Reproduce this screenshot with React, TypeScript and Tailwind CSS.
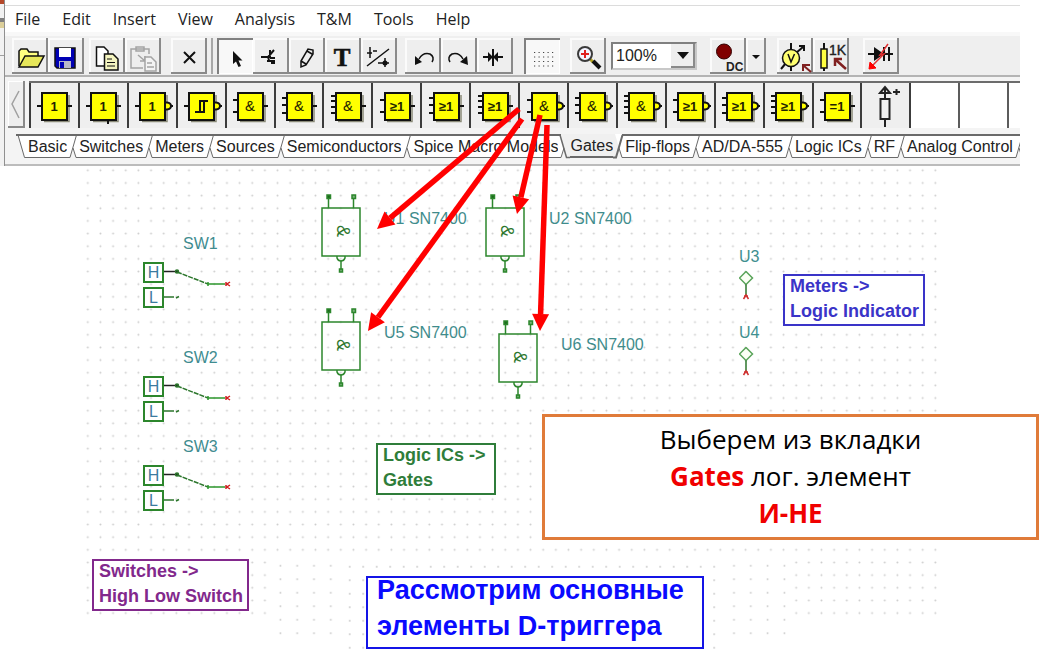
import type { ReactNode } from "react";

type Pin = "none" | "line" | "bubble";
type Chip = { name: string; mark: string; inputs: number; out: Pin; stem?: boolean };

const menus = ["File", "Edit", "Insert", "View", "Analysis", "T&M", "Tools", "Help"];

const chips: Chip[] = [
  { name: "Buffer", mark: "1", inputs: 1, out: "line" },
  { name: "Tri-state buffer", mark: "1", inputs: 1, out: "line", stem: true },
  { name: "Inverter", mark: "1", inputs: 1, out: "bubble" },
  { name: "Schmitt inverter", mark: "S", inputs: 1, out: "bubble" },
  { name: "AND 2", mark: "&", inputs: 2, out: "line" },
  { name: "AND 3", mark: "&", inputs: 3, out: "line" },
  { name: "AND 4", mark: "&", inputs: 4, out: "line" },
  { name: "OR 2", mark: "≥1", inputs: 2, out: "line" },
  { name: "OR 3", mark: "≥1", inputs: 3, out: "line" },
  { name: "OR 4", mark: "≥1", inputs: 4, out: "line" },
  { name: "NAND 2", mark: "&", inputs: 2, out: "bubble" },
  { name: "NAND 3", mark: "&", inputs: 3, out: "bubble" },
  { name: "NAND 4", mark: "&", inputs: 4, out: "bubble" },
  { name: "NOR 2", mark: "≥1", inputs: 2, out: "bubble" },
  { name: "NOR 3", mark: "≥1", inputs: 3, out: "bubble" },
  { name: "NOR 4", mark: "≥1", inputs: 4, out: "bubble" },
  { name: "XOR", mark: "=1", inputs: 2, out: "line" },
];

const tabs = [
  "Basic", "Switches", "Meters", "Sources", "Semiconductors", "Spice Macro Models",
  "Gates", "Flip-flops", "AD/DA-555", "Logic ICs", "RF", "Analog Control",
];
const activeTab = "Gates";

const inputRows: Record<number, number[]> = {
  1: [23],
  2: [17, 29],
  3: [15, 22, 30],
  4: [13, 18, 24, 30],
};

function ToolButton({ label, pressed, narrow, children }: { label: string; pressed?: boolean; narrow?: boolean; children: ReactNode }) {
  const size = narrow ? "h-9 w-5" : "h-9 w-9";
  const look = pressed
    ? "bg-[#f8f8f8] shadow-[inset_2px_2px_0_#808080,inset_-1px_-1px_0_#ffffff]"
    : "bg-[#eeeeee] shadow-[inset_-2px_-2px_0_#8a8a8a,inset_2px_2px_0_#fbfbfb]";
  return (
    <button type="button" aria-label={label} aria-pressed={pressed} className={`${size} ${look} shrink-0`}>
      <svg viewBox={narrow ? "0 0 20 36" : "0 0 36 36"} className="block h-full w-full" fill="none" stroke="#111">
        {children}
      </svg>
    </button>
  );
}

function ChipIcon({ chip }: { chip: Chip }) {
  return (
    <svg viewBox="0 0 46 44" className="h-11 w-[46px]" fill="none" stroke="#111" strokeWidth="2">
      <path d="M13 38.5H38V12" stroke="#8a8a78" strokeWidth="1.500" />
      {inputRows[chip.inputs].map((y) => (
        <path key={y} d={`M6 ${y}H11`} />
      ))}
      {chip.out === "line" && <path d="M36 23H41" />}
      {chip.out === "bubble" && <path d="M36 19.5H38Q42 20 42 23Q42 26 38 26.5H36M42 23H44" fill="#ffff00" />}
      {chip.stem && <path d="M28 38V41" />}
      <rect x="11" y="10" width="25" height="27" fill="#ffff00" />
      {chip.mark === "S" ? (
        <path d="M17 29H22V18H30M21 29H26V18" />
      ) : (
        <text
          x="23"
          y="28"
          textAnchor="middle"
          fill="#222200"
          stroke="none"
          className={chip.mark === "&" ? "font-['Liberation_Sans'] text-[15px]" : "font-['Liberation_Sans'] text-[13px] font-bold"}
        >
          {chip.mark}
        </text>
      )}
    </svg>
  );
}

function TabEdge({ before, after }: { before?: string; after?: string }) {
  const leftActive = before === activeTab;
  const rightActive = after === activeTab;
  return (
    <svg viewBox="0 0 12 26" className="h-[26px] w-3 shrink-0" fill="none" stroke="#6a6a6a">
      {before && <path d="M0 0H10L3.500 23.500H0Z" fill={leftActive ? "#f0f0f0" : "#fff"} stroke="none" />}
      {after && <path d="M2 0H12V23.500H9Z" fill={rightActive ? "#f0f0f0" : "#fff"} stroke="none" />}
      {before && <path d={rightActive ? "M0 23.500H3L6 14" : "M0 23.500H3L9.500 1"} strokeWidth={leftActive ? 2 : 1} />}
      {after && <path d={rightActive || !before ? "M2 1L8.500 23.500H12" : "M6 14L9 23.500H12"} strokeWidth={rightActive ? 1.5 : 1} />}
      <path d={rightActive ? "M0 1H3" : leftActive ? "M9 1H12" : "M0 1H12"} strokeWidth="2" />
    </svg>
  );
}

function GateSymbol({ place }: { place: string }) {
  return (
    <svg viewBox="0 0 42 80" className={`absolute h-20 w-[42px] ${place}`} fill="none" stroke="#2c862c" strokeWidth="1.500">
      <rect x="2" y="14" width="38" height="48" />
      <path d="M8.500 4V14M33.500 4V14M21 67V75" />
      <rect x="7" y="1" width="3.500" height="3.500" fill="#1d6a1d" />
      <rect x="32" y="1" width="3.500" height="3.500" fill="#7ab27a" />
      <rect x="19.500" y="75" width="3" height="3" fill="#7ab27a" />
      <path d="M17 62V64Q18 67 21 67Q24 67 25 64V62" />
      <text transform="translate(17 37) rotate(90)" textAnchor="middle" fill="#2c762c" stroke="none" className="font-['Liberation_Sans'] text-[18px]">
        &amp;
      </text>
    </svg>
  );
}

function SwitchSymbol({ place, name }: { place: string; name: string }) {
  return (
    <div className={`absolute w-[90px] ${place}`}>
      <div className="pl-10 leading-5 text-[#3f8c90]">{name}</div>
      <div className="relative mt-2 flex flex-col gap-1">
        <div className="flex h-[21px] w-[21px] items-center justify-center border-2 border-[#2c862c] bg-white text-[#3b7ba0]">H</div>
        <div className="flex h-[21px] w-[21px] items-center justify-center border-2 border-[#2c862c] bg-white text-[#3b7ba0]">L</div>
        <svg viewBox="0 0 90 48" className="absolute left-0 top-0 h-12 w-[90px]" fill="none" stroke="#2c762c" strokeWidth="1.500">
          <path d="M21 9.500H34" stroke="#222" />
          <circle cx="34" cy="9.500" r="1.500" fill="#222" />
          <path d="M34 10L65 22" strokeDasharray="5 1" />
          <path d="M65 22H82M65 20V24" stroke="#2c962c" />
          <path d="M83 20V24M87 20L84 22L87 24" stroke="#d02020" />
          <path d="M21 35H31M33 36L36 34.500" />
        </svg>
      </div>
    </div>
  );
}

function IndicatorSymbol({ place, name }: { place: string; name: string }) {
  return (
    <div className={`absolute w-8 ${place}`}>
      <div className="leading-5 text-[#3f9090]">{name}</div>
      <svg viewBox="0 0 16 32" className="mt-1 h-8 w-4" fill="none" stroke="#5aa45a" strokeWidth="1.500">
        <path d="M7 .500L13.500 7L7 13.500L.5 7Z" fill="#fbfff5" />
        <path d="M7 13.500V25" stroke="#2c762c" />
        <path d="M4.500 28L7 24L9.500 28M5 25H9" stroke="#d03030" />
      </svg>
    </div>
  );
}

function DotGrid() {
  return (
    <svg className="absolute left-0 top-0 h-full w-[1020px]" aria-hidden="true">
      <defs>
        <pattern id="fine" x="81.500" y="-2" width="12.650" height="12.650" patternUnits="userSpaceOnUse">
          <circle cx="6.300" cy="6.300" r="1" fill="#cdcdcd" />
        </pattern>
        <pattern id="coarse" x="272" y="393" width="16.800" height="13.500" patternUnits="userSpaceOnUse">
          <circle cx="8.400" cy="6.700" r="1" fill="#cdcdcd" />
        </pattern>
        <pattern id="middle" x="343" y="394" width="13.500" height="13.500" patternUnits="userSpaceOnUse">
          <circle cx="6.700" cy="6.700" r="1" fill="#cdcdcd" />
        </pattern>
      </defs>
      <rect x="82" y="0" width="860" height="390" fill="url(#fine)" />
      <rect x="82" y="390" width="187" height="62" fill="url(#fine)" />
      <rect x="794" y="390" width="148" height="62" fill="url(#fine)" />
      <rect x="274" y="393" width="66" height="80" fill="url(#coarse)" />
      <rect x="728" y="393" width="62" height="80" fill="url(#coarse)" />
      <rect x="345" y="394" width="374" height="94" fill="url(#middle)" />
    </svg>
  );
}

function Note({ place, children }: { place: string; children: ReactNode }) {
  return (
    <div className={`absolute h-[52px] whitespace-nowrap border-2 bg-white text-[18px] font-bold leading-[25px] ${place}`}>
      <p className="-mt-0.5">{children}</p>
    </div>
  );
}

function Toolbar() {
  return (
    <div className="flex h-[45px] items-center border-b-2 border-t-4 border-b-[#b4b4b4] border-t-[#f8f8f8] bg-[#efefef] pl-[7px]">
      <ToolButton label="Open">
        <path d="M7 28V13L9 11H15L17 14H26V18" fill="#ffff80" strokeWidth="1.500" />
        <path d="M7 29L13 18H32L26 29Z" fill="#e8e85a" strokeWidth="1.500" />
      </ToolButton>
      <ToolButton label="Save">
        <path d="M7 10H27V30H9L7 28Z" fill="#0000b4" strokeWidth="1.500" />
        <rect x="11" y="10" width="12" height="9" fill="#fff" stroke="none" />
        <rect x="11" y="23" width="12" height="7" fill="#b8b8c8" stroke="none" />
        <rect x="12" y="24" width="4" height="6" fill="#0000b4" stroke="none" />
      </ToolButton>
      <div className="ml-[5px] flex">
        <ToolButton label="Copy">
          <path d="M7.500 9H15L19 13V28H7.500Z" fill="#fff" strokeWidth="1.500" />
          <path d="M15.500 16H24L29 21V32H15.500Z" fill="#f5f5c0" strokeWidth="1.500" />
          <path d="M18 21H23M18 24.500H26M18 28H26" />
        </ToolButton>
        <ToolButton label="Paste">
          <g stroke="#a4a4a4" strokeWidth="1.500">
            <path d="M18 30H6V11H24V16M11 13V9H19V13ZM13 17L20 23M20 18V23H15" />
            <path d="M20 19H26L31 24V33H20Z" fill="#f4f4f4" />
            <path d="M22 25H27M22 29H29" />
          </g>
        </ToolButton>
      </div>
      <div className="ml-[10px] flex">
        <ToolButton label="Delete"><path d="M13 14L24 25M24 14L13 25" strokeWidth="2" /></ToolButton>
      </div>
      <div className="mx-1 h-9 w-[2px] bg-[#a8a8a8]" />
      <ToolButton label="Select" pressed>
        <path d="M16 13V26L19 23.500L21.500 29L24 28L21.500 22.500H25.500Z" fill="#111" stroke="none" />
      </ToolButton>
      <ToolButton label="Wire node">
        <path d="M8 19H15M21 12L15 19L16 22M17 12V20M14 23H22M17 20H22" strokeWidth="2" />
        <rect x="18" y="22" width="4" height="4" fill="#111" stroke="none" />
      </ToolButton>
      <ToolButton label="Draw">
        <path d="M12 29V23L19 11L24 12V16L17 27ZM12 23L17 26M18 13L23 16" strokeWidth="1.500" />
      </ToolButton>
      <ToolButton label="Text">
        <text x="17" y="28" textAnchor="middle" fill="#111" stroke="#111" strokeWidth=".6" className="font-['Liberation_Serif'] text-[25px] font-bold">T</text>
      </ToolButton>
      <ToolButton label="Scale">
        <path d="M6 15H11M9 9V20M12 13H16M6 28L28 11M17 25H28M24 20V29" strokeWidth="1.500" />
        <circle cx="24" cy="25" r="2.500" fill="#111" stroke="none" />
      </ToolButton>
      <div className="ml-2 flex">
        <ToolButton label="Undo">
          <path d="M27 24Q30 19 25 16Q18 14 14 21" strokeWidth="1.500" />
          <path d="M10 18L17 24L10 27Z" fill="#111" stroke="none" />
        </ToolButton>
        <ToolButton label="Redo">
          <path d="M9 24Q6 19 11 16Q18 14 22 21" strokeWidth="1.500" />
          <path d="M26 18L19 24L27 27Z" fill="#111" stroke="none" />
        </ToolButton>
        <ToolButton label="Junction">
          <path d="M6 19H26M16 11V28" strokeWidth="2" />
          <path d="M11 14L16 19L11 24ZM21 14L16 19L21 24Z" fill="#111" stroke="none" />
        </ToolButton>
      </div>
      <div className="ml-[11px] flex">
        <ToolButton label="Grid" pressed>
          <path d="M10 14.500H31M10 19H31M10 23.500H31M10 28H31" strokeWidth="1.200" strokeDasharray="1.200 3.300" stroke="#444" />
        </ToolButton>
      </div>
      <div className="ml-[10px] flex">
        <ToolButton label="Zoom">
          <path d="M20 21L23 24" stroke="#b0a020" strokeWidth="3" />
          <path d="M23 23L30 30" strokeWidth="4" />
          <circle cx="15" cy="16" r="7" fill="#f4f4ff" stroke="#3a3a3a" strokeWidth="2" />
          <path d="M11 16H19M15 12V20" stroke="#e02020" strokeWidth="2" />
        </ToolButton>
      </div>
      <div className="ml-[5px] flex h-7 w-[86px] shrink-0 border-2 border-b-[#c8c8c8] border-l-[#808080] border-r-[#c8c8c8] border-t-[#808080] bg-white">
        <select aria-label="Zoom level" className="min-w-0 flex-1 appearance-none bg-transparent pl-[3px] text-base leading-5 text-[#222] outline-none">
          <option>100%</option>
        </select>
        <span className="pointer-events-none flex w-6 items-center justify-center bg-[#eeeeee] shadow-[inset_-2px_-2px_0_#8a8a8a]">
          <svg viewBox="0 0 12 7" className="h-[7px] w-3"><path d="M0 0H12L6 7Z" fill="#111" /></svg>
        </span>
      </div>
      <div className="ml-[13px] flex">
        <ToolButton label="DC analysis">
          <circle cx="14" cy="13.500" r="7.500" fill="#800000" stroke="#300" />
          <text x="16" y="33" fill="#222" stroke="none" className="font-['Liberation_Sans'] text-[12px] font-bold">DC</text>
        </ToolButton>
        <ToolButton label="Analysis mode" narrow><path d="M6 17H14L10 21Z" fill="#111" stroke="none" /></ToolButton>
      </div>
      <div className="ml-[11px] flex">
        <ToolButton label="Voltmeter">
          <path d="M14 5V33M4 31L9 25M19 15L26 9M22 8H27V13" strokeWidth="2" />
          <circle cx="14" cy="20" r="8.500" fill="#ffff70" strokeWidth="1.500" />
          <path d="M11 16L14 24L17.500 16" strokeWidth="1.500" />
          <path d="M34 34L27 28M26 33V27H33" stroke="#802020" strokeWidth="2" />
        </ToolButton>
        <ToolButton label="Ohmmeter">
          <path d="M11 5V33" strokeWidth="2" />
          <rect x="8" y="11" width="6" height="19" fill="#ffff40" strokeWidth="1.500" />
          <text x="16" y="17" fill="#222" stroke="#222" strokeWidth=".4" className="font-['Liberation_Sans'] text-[14px]">1K</text>
          <path d="M33 31L23 22M22 28V21H29" stroke="#802020" strokeWidth="2.500" />
        </ToolButton>
      </div>
      <div className="ml-[14px] flex">
        <ToolButton label="Fault">
          <path d="M5 16H30M21 9V23M26 9V23" strokeWidth="2" />
          <path d="M11 9L21 16L11 23Z" fill="#111" stroke="none" />
          <path d="M25 6L17 17L21 16L9 28" stroke="#e03030" strokeWidth="1.500" />
          <path d="M6 31L7 24L13 30Z" fill="#ff0000" stroke="#ff0000" />
        </ToolButton>
      </div>
    </div>
  );
}

function ComponentBar() {
  return (
    <div className="flex pl-[3px] pt-1">
      <button type="button" aria-label="Scroll left" className="mr-1 h-[47px] w-[17px] shrink-0 bg-[#eeeeee] shadow-[inset_-2px_-2px_0_#8a8a8a,inset_1px_1px_0_#ffffff]">
        <svg viewBox="0 0 17 47" className="h-full w-full" fill="none" stroke="#a0a0a0" strokeWidth="1.500">
          <path d="M11 10L4 23L11 37" />
        </svg>
      </button>
      <div className="flex min-w-0 flex-1 border-t-2 border-[#6c6c6c]">
        {chips.map((chip) => (
          <button key={chip.name} type="button" aria-label={chip.name} className="flex h-[45px] min-w-0 flex-1 justify-center border-l-2 border-[#3c3c3c] bg-[#efefef]">
            <ChipIcon chip={chip} />
          </button>
        ))}
        <button type="button" aria-label="Pull-up" className="flex h-[45px] min-w-0 flex-1 justify-center border-l-2 border-[#3c3c3c] bg-[#efefef]">
          <svg viewBox="0 0 46 44" className="h-11 w-[46px]" fill="none" stroke="#222" strokeWidth="2">
            <path d="M22 15V5M17 10L22 4L27 10ZM22 36V44M30 9H37M33.500 6V12" />
            <rect x="17.500" y="16" width="9" height="20" />
          </svg>
        </button>
        <div className="h-[45px] flex-1 border-l-2 border-[#3c3c3c] bg-white" />
        <div className="h-[45px] flex-1 border-l-2 border-[#5c5c5c] bg-white" />
        <div className="h-[45px] w-[13px] border-l-2 border-[#5c5c5c] bg-white" />
      </div>
    </div>
  );
}

function CategoryTabs() {
  return (
    <div role="tablist" className="mt-[6px] flex overflow-hidden border-b-2 border-[#bcbcbc] pb-1 pl-[11px] text-base text-[#222]">
      <TabEdge after={tabs[0]} />
      {tabs.map((tab, i) => (
        <div key={tab} className="flex shrink-0">
          <button
            type="button"
            role="tab"
            aria-selected={tab === activeTab}
            className={
              tab === activeTab
                ? "h-6 border-b-2 border-t-2 border-b-[#6a6a6a] border-t-[#f0f0f0] bg-[#f0f0f0] leading-5"
                : "h-6 border-b border-t-2 border-[#6a6a6a] bg-white leading-5"
            }
          >
            {tab}
          </button>
          <TabEdge before={tab} after={tabs[i + 1] ?? "more"} />
        </div>
      ))}
    </div>
  );
}

const arrows = [
  [519, 109, 377, 229],
  [522, 119, 368, 331],
  [540, 115, 517, 214],
  [547, 125, 540, 331],
];

function Arrows() {
  return (
    <svg className="pointer-events-none absolute left-0 top-0 h-[400px] w-[700px]" aria-hidden="true">
      {arrows.map(([x1, y1, x2, y2]) => {
        const len = Math.hypot(x2 - x1, y2 - y1);
        const ux = (x2 - x1) / len;
        const uy = (y2 - y1) / len;
        const bx = x2 - ux * 17;
        const by = y2 - uy * 17;
        return (
          <g key={`${x1}-${x2}`} fill="#ff0000" stroke="#ff0000">
            <line x1={x1} y1={y1} x2={bx} y2={by} strokeWidth="5.500" />
            <polygon stroke="none" points={`${x2},${y2} ${bx - uy * 8.5},${by + ux * 8.5} ${bx + uy * 8.5},${by - ux * 8.5}`} />
          </g>
        );
      })}
    </svg>
  );
}

export default function App() {
  return (
    <div className="relative min-h-screen overflow-hidden bg-white font-['Liberation_Sans',sans-serif] text-base">
      <div className="flex">
        <div className="flex w-1 shrink-0 flex-col bg-[#f2f2f2]" aria-hidden="true">
          <div className="h-1 bg-[#b5482a]" />
          <div className="h-3.5" />
          <div className="h-1 bg-[#808080]" />
          <div className="h-1.5 bg-[#dccf9a]" />
          <div className="h-7 border-b border-[#a0a0a0]" />
        </div>
        <header className="mr-7 min-w-0 flex-1 border-l border-[#909090] bg-[#f4f4f4]">
          <div className="h-[6px] border-b border-[#dcdcdc] bg-white" />
          <nav className="flex h-[26px] items-center gap-[22px] bg-white pl-[10px] font-['Open_Sans',sans-serif] text-base text-[#222]">
            {menus.map((menu) => (
              <button key={menu} type="button" className="leading-6">{menu}</button>
            ))}
          </nav>
          <Toolbar />
          <ComponentBar />
          <CategoryTabs />
        </header>
      </div>

      <main className="relative h-[494px]">
        <DotGrid />
        <GateSymbol place="left-[320px] top-7" />
        <GateSymbol place="left-[484px] top-7" />
        <GateSymbol place="left-[320px] top-[142px]" />
        <GateSymbol place="left-[497px] top-[154px]" />
        <span className="absolute left-[384px] top-[43px] leading-5 text-[#3f8c8c]">U1 SN7400</span>
        <span className="absolute left-[549px] top-[43px] leading-5 text-[#3f8c8c]">U2 SN7400</span>
        <span className="absolute left-[384px] top-[157px] leading-5 text-[#3f8c8c]">U5 SN7400</span>
        <span className="absolute left-[561px] top-[169px] leading-5 text-[#3f8c8c]">U6 SN7400</span>
        <SwitchSymbol place="left-[143px] top-[68px]" name="SW1" />
        <SwitchSymbol place="left-[143px] top-[182px]" name="SW2" />
        <SwitchSymbol place="left-[143px] top-[271px]" name="SW3" />
        <IndicatorSymbol place="left-[739px] top-[81px]" name="U3" />
        <IndicatorSymbol place="left-[739px] top-[157px]" name="U4" />

        <Note place="left-[783px] top-[108px] w-[142px] border-[#3a34c8] pl-[5px] text-[#3a34c8]">
          Meters -&gt;<br />Logic Indicator
        </Note>
        <Note place="left-[376px] top-[277px] w-[120px] border-[#2f7d3a] pl-[5px] text-[#2f7d3a]">
          Logic ICs -&gt;<br />Gates
        </Note>
        <Note place="left-[92px] top-[393px] w-[157px] border-[#82288c] pl-[5px] text-[#82288c]">
          Switches -&gt;<br />High Low Switch
        </Note>
        <div className="absolute left-[366px] top-[410px] h-[73px] w-[338px] whitespace-nowrap border-2 border-[#1414e6] bg-white pl-[9px]">
          <h1 className="-mt-1.5 text-[27px] font-bold leading-9 text-[#0a0aff]">
            Рассмотрим основные<br />элементы D-триггера
          </h1>
        </div>
        <p className="absolute left-[542px] top-[248px] w-[497px] border-[3px] border-[#e07b39] bg-white pb-[5px] pt-1 text-center font-['Open_Sans','Noto_Sans',sans-serif] text-[26px] leading-[37px] text-black">
          Выберем из вкладки<br />
          <strong className="text-[#f00000]">Gates</strong> лог. элемент<br />
          <strong className="text-[#f00000]">И-НЕ</strong>
        </p>
      </main>
      <Arrows />
    </div>
  );
}
